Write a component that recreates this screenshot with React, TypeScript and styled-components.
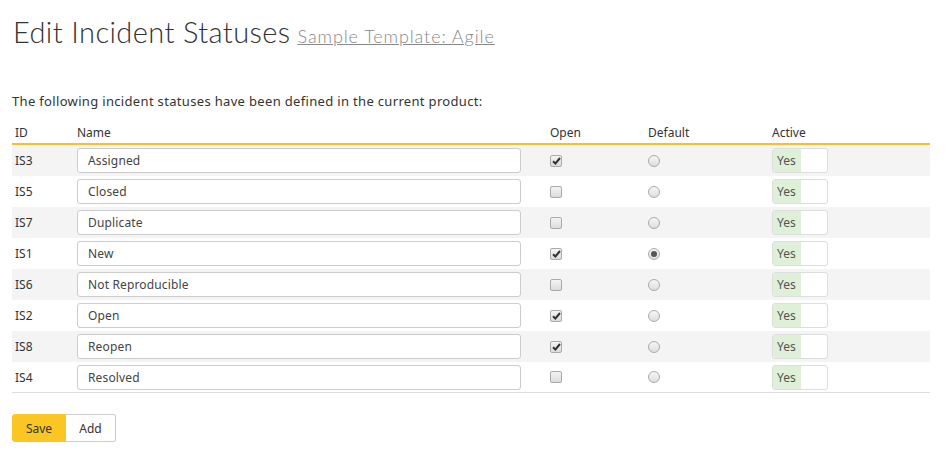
import React from "react";
import styled, { createGlobalStyle } from "styled-components";

const Global = createGlobalStyle`
  html, body { margin: 0; padding: 0; background: #fff; }
  body { font-family: "Noto Sans", "Open Sans", sans-serif; color: #333; }
`;

const Page = styled.div`
  padding: 14px 19px 0 12px;
`;

const TitleRow = styled.h1`
  margin: 0 0 0 1px;
  display: flex;
  align-items: baseline;
  gap: 7px;
  font-family: Lato, "Open Sans", sans-serif;
  font-weight: 300;
  font-size: 29px;
  color: #333;
  letter-spacing: 0.4px;
  height: 40px;
`;

const TitleLink = styled.a`
  font-size: 18px;
  color: #888;
  text-decoration: underline;
  letter-spacing: 0.9px;
`;

const Intro = styled.p`
  margin: 39px 0 0 0;
  font-size: 13px;
  line-height: 16px;
  letter-spacing: 0.33px;
  color: #333;
`;

const Table = styled.div`
  margin-top: 13px;
  display: grid;
  grid-template-columns: 65px 473px 98px 124px 1fr;
`;

const HeadCell = styled.div<{ $pad?: boolean }>`
  font-size: 12px;
  line-height: 16px;
  padding: 3px 0 2px ${(p) => (p.$pad ? "3px" : "0")};
  color: #333;
  border-bottom: 2px solid #f2c12e;
`;

const Row = styled.div<{ $alt: boolean; $last: boolean }>`
  display: contents;
  & > div {
    background: ${(p) => (p.$alt ? "#f4f4f4" : "#fff")};
    border-bottom: ${(p) => (p.$last ? "1px solid #ddd" : "none")};
    height: ${(p) => (p.$last ? "30px" : "31px")};
  }
`;

const Cell = styled.div<{ $pad?: boolean }>`
  display: flex;
  align-items: center;
  padding-left: ${(p) => (p.$pad ? "3px" : "0")};
  font-size: 12px;
  color: #333;
`;

const NameInput = styled.div`
  box-sizing: border-box;
  width: 444px;
  height: 25px;
  border: 1px solid #ccc;
  border-radius: 3px;
  background: #fff;
  padding-left: 10px;
  display: flex;
  align-items: center;
  font-size: 12px;
  letter-spacing: 0.15px;
  color: #444;
`;

const Check = styled.span`
  box-sizing: border-box;
  width: 12px;
  height: 12px;
  border: 1px solid #aaa;
  border-radius: 2px;
  background: linear-gradient(#f4f4f4, #dcdcdc);
  display: flex;
  align-items: center;
  justify-content: center;
`;

const Radio = styled.span<{ $on: boolean }>`
  box-sizing: border-box;
  width: 12px;
  height: 12px;
  border: 1px solid #aaa;
  border-radius: 50%;
  background: linear-gradient(#f6f6f6, #dedede);
  display: flex;
  align-items: center;
  justify-content: center;
  &::after {
    content: "";
    display: ${(p) => (p.$on ? "block" : "none")};
    width: 6px;
    height: 6px;
    border-radius: 50%;
    background: #555;
  }
`;

const Toggle = styled.div`
  box-sizing: border-box;
  width: 56px;
  height: 25px;
  border: 1px solid #ddd;
  border-radius: 3px;
  display: flex;
  overflow: hidden;
  background: #fff;
`;

const ToggleOn = styled.span`
  width: 28px;
  background: #dff0d8;
  color: #555;
  font-size: 12px;
  display: flex;
  align-items: center;
  padding-left: 4px;
  box-sizing: border-box;
`;

const Buttons = styled.div`
  margin-top: 21px;
  display: flex;
`;

const Btn = styled.button<{ $primary?: boolean }>`
  font-family: "Noto Sans", sans-serif;
  font-size: 12px;
  height: 28px;
  padding: 0;
  border: 1px solid ${(p) => (p.$primary ? "#f9c623" : "#ccc")};
  background: ${(p) => (p.$primary ? "#f9c623" : "#fff")};
  color: #333;
  border-radius: ${(p) => (p.$primary ? "3px 0 0 3px" : "0 3px 3px 0")};
  ${(p) => (p.$primary ? "" : "border-left: none;")}
  width: ${(p) => (p.$primary ? "54px" : "50px")};
`;

const rows = [
  { id: "IS3", name: "Assigned", open: true, def: false },
  { id: "IS5", name: "Closed", open: false, def: false },
  { id: "IS7", name: "Duplicate", open: false, def: false },
  { id: "IS1", name: "New", open: true, def: true },
  { id: "IS6", name: "Not Reproducible", open: false, def: false },
  { id: "IS2", name: "Open", open: true, def: false },
  { id: "IS8", name: "Reopen", open: true, def: false },
  { id: "IS4", name: "Resolved", open: false, def: false },
];

const Tick = () => (
  <svg width="9" height="8" viewBox="0 0 9 8">
    <path d="M1 4.2 L3.4 6.5 L8 1" stroke="#333" strokeWidth="2" fill="none" />
  </svg>
);

export default function App() {
  return (
    <Page>
      <Global />
      <TitleRow>
        Edit Incident Statuses <TitleLink href="#">Sample Template: Agile</TitleLink>
      </TitleRow>
      <Intro>The following incident statuses have been defined in the current product:</Intro>
      <Table>
        <HeadCell $pad>ID</HeadCell>
        <HeadCell>Name</HeadCell>
        <HeadCell>Open</HeadCell>
        <HeadCell>Default</HeadCell>
        <HeadCell>Active</HeadCell>
        {rows.map((r, i) => (
          <Row key={r.id} $alt={i % 2 === 0} $last={i === rows.length - 1}>
            <Cell $pad>{r.id}</Cell>
            <Cell>
              <NameInput>{r.name}</NameInput>
            </Cell>
            <Cell>
              <Check>{r.open && <Tick />}</Check>
            </Cell>
            <Cell>
              <Radio $on={r.def} />
            </Cell>
            <Cell>
              <Toggle>
                <ToggleOn>Yes</ToggleOn>
              </Toggle>
            </Cell>
          </Row>
        ))}
      </Table>
      <Buttons>
        <Btn $primary>Save</Btn>
        <Btn>Add</Btn>
      </Buttons>
    </Page>
  );
}
